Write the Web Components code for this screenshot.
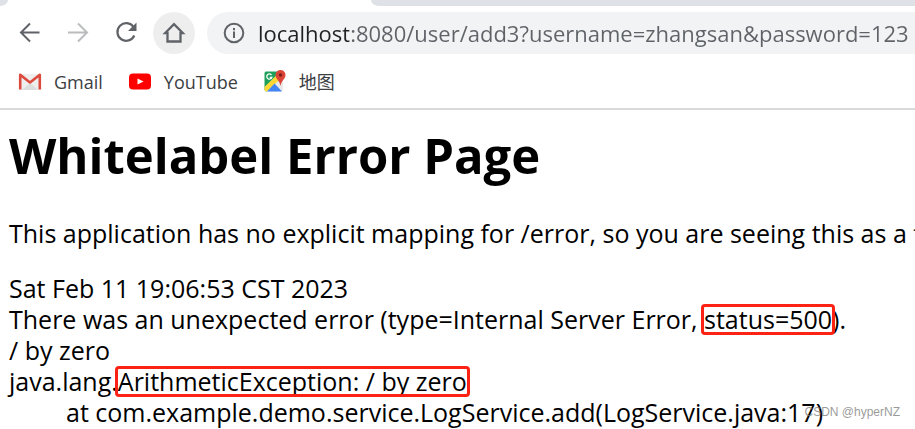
<!DOCTYPE html>
<html lang="en">
<head>
    <meta charset="utf-8">
    <title>Whitelabel Error Page</title>
    <style>
        body {
            margin: 0;
            background: #fff;
            font-family: "Open Sans", "Noto Sans CJK SC", sans-serif;
            overflow: hidden;
        }
    </style>
</head>
<body>

<browser-window>
    <tab-strip slot="chrome"></tab-strip>
    <nav-toolbar slot="chrome" url="localhost:8080/user/add3?username=zhangsan&amp;password=123"></nav-toolbar>
    <bookmark-bar slot="chrome">
        <bookmark-item href="#gmail">
            <svg slot="icon" width="24" height="24" viewBox="0 0 24 24" aria-hidden="true">
                <path d="M2 4h20v16H2z" fill="#eee"/>
                <path d="M4 20l8-7 8 7z" fill="#ddd"/>
                <path d="M2.200 19.500V4.800L12 12.500l9.800-7.700v14.700" fill="none" stroke="#dc4a3d" stroke-width="2.600" stroke-linejoin="round"/>
            </svg>
            Gmail
        </bookmark-item>
        <bookmark-item href="#youtube">
            <svg slot="icon" width="24" height="24" viewBox="0 0 24 24" aria-hidden="true">
                <rect x="1" y="3.500" width="22" height="16" rx="4" fill="#f00"/>
                <path d="M9.500 8.500v6l6-3z" fill="#fff"/>
            </svg>
            YouTube
        </bookmark-item>
        <bookmark-item href="#maps">
            <svg slot="icon" width="24" height="24" viewBox="0 0 24 24" aria-hidden="true">
                <path d="M3 1.500h15v6L4 21.500q-2.500 0-2.500-2V3.500q0-2 1.500-2z" fill="#1fa05a"/>
                <path d="M2 17L15 4l5 5v10.500q0 2-2 2H4z" fill="#e8e8e8"/>
                <path d="M1.500 17L13 6l3 4L4 21.500q-2.500 0-2.500-2z" fill="#fdd835"/>
                <path d="M4 21.500l7.500-8 7.500 8z" fill="#4285f4"/>
                <path d="M8.500 5A2.600 2.600 0 1 0 8.800 7.500H6.800" fill="none" stroke="#fff" stroke-width="1.300"/>
                <path d="M17.500 0a5 5 0 0 1 5 5c0 4-4 5-5 11-1-6-5-7-5-11a5 5 0 0 1 5-5z" fill="#db4437"/>
                <circle cx="17.500" cy="5" r="1.800" fill="#7b231b"/>
            </svg>
            地图
        </bookmark-item>
    </bookmark-bar>

    <error-page heading="Whitelabel Error Page">
        <p>This application has no explicit mapping for /error, so you are seeing this as a fallback.</p>
        <div>Sat Feb 11 19:06:53 CST 2023</div>
        <div>There was an unexpected error (type=Internal Server Error, <red-frame>status=500</red-frame>).</div>
        <div>/ by zero</div>
        <div>java.lang.<red-frame>ArithmeticException: / by zero</red-frame></div>
        <div class="trace">at com.example.demo.service.LogService.add(LogService.java:17)</div>
    </error-page>
    <water-mark slot="overlay">CSDN @hyperNZ</water-mark>
</browser-window>

<template id="browser-window">
    <style>
        :host {
            display: flex;
            flex-direction: column;
            position: relative;
            height: 100vh;
            overflow: hidden;
        }
        main {
            flex: 1;
            min-height: 0;
        }
    </style>
    <slot name="chrome"></slot>
    <main><slot></slot></main>
    <slot name="overlay"></slot>
</template>

<template id="tab-strip">
    <style>
        :host {
            display: flex;
            flex: none;
            height: 6px;
            background: #fff;
        }
        .before, .after {
            background: #dee1e6;
        }
        .before {
            width: 8px;
            border-bottom-right-radius: 8px 6px;
        }
        .tab {
            width: 363px;
        }
        .after {
            flex: 1;
            border-bottom-left-radius: 8px 6px;
        }
    </style>
    <div class="before"></div>
    <div class="tab"></div>
    <div class="after"></div>
</template>

<template id="nav-toolbar">
    <style>
        :host {
            display: flex;
            flex: none;
            gap: 12px;
            padding: 6px 0 6px 9px;
        }
        nav {
            display: flex;
            gap: 6px;
        }
        button {
            display: grid;
            place-items: center;
            width: 42px;
            height: 42px;
            padding: 0;
            border: 0;
            border-radius: 50%;
            background: none;
            color: #5f6368;
        }
        button:disabled {
            color: #babcbe;
        }
        button.hover {
            background: #eee;
        }
        svg {
            fill: none;
            stroke: currentColor;
            stroke-width: 2;
        }
        .omnibox {
            display: flex;
            flex: 1;
            align-items: center;
            gap: 12px;
            min-width: 0;
            padding-left: 15px;
            border-radius: 21px 0 0 21px;
            background: #f1f3f4;
            color: #5f6368;
        }
        .omnibox svg {
            flex: none;
        }
        input {
            --host-width: 91px;
            flex: 1;
            min-width: 0;
            padding: 0;
            border: 0;
            outline: 0;
            font: 22px/42px "Open Sans", sans-serif;
            color: #5f6368;
            background: linear-gradient(90deg, #202124 var(--host-width), #5f6368 var(--host-width));
            -webkit-background-clip: text;
            background-clip: text;
            -webkit-text-fill-color: transparent;
        }
    </style>
    <nav>
        <button aria-label="Back">
            <svg width="24" height="24" viewBox="0 0 24 24"><path d="M21.500 11.500H3.500M12 2.500l-9 9 9 9"/></svg>
        </button>
        <button aria-label="Forward" disabled>
            <svg width="24" height="24" viewBox="0 0 24 24"><path d="M2 11.500h18.500M12 2.500l9 9-9 9"/></svg>
        </button>
        <button aria-label="Reload">
            <svg width="24" height="24" viewBox="0 0 24 24">
                <path d="M19.500 6A8.800 8.800 0 1 0 20.300 14.500" stroke-width="2.200"/>
                <path d="M22.500 1.500V10H14z" fill="currentColor" stroke="none"/>
            </svg>
        </button>
        <button class="hover" aria-label="Home">
            <svg width="24" height="24" viewBox="0 0 24 24">
                <path d="M5.500 20.500V12H3.200L12 3.200l8.800 8.800h-2.300v8.500z" stroke-width="2.300"/>
            </svg>
        </button>
    </nav>
    <div class="omnibox">
        <svg width="24" height="24" viewBox="0 0 24 24">
            <circle cx="12" cy="12" r="9.300"/>
            <path d="M12 10.500v6.500M12 7v2.200"/>
        </svg>
        <input type="text" aria-label="Address" spellcheck="false">
    </div>
</template>

<template id="bookmark-bar">
    <style>
        :host {
            display: flex;
            flex: none;
            gap: 25px;
            height: 44px;
            padding: 0 18px 4px;
            border-bottom: 2px solid #dadada;
        }
    </style>
    <slot></slot>
</template>

<template id="bookmark-item">
    <style>
        :host {
            display: flex;
        }
        a {
            display: flex;
            align-items: center;
            gap: 12px;
            color: #3c4043;
            font-size: 18px;
            line-height: 24px;
            text-decoration: none;
            white-space: nowrap;
        }
    </style>
    <a><slot name="icon"></slot><span><slot></slot></span></a>
</template>

<template id="error-page">
    <style>
        :host {
            display: block;
            padding: 12px 9px;
            color: #000;
            font-size: 25px;
            line-height: 31px;
            white-space: nowrap;
        }
        h1 {
            margin: 0;
            font-size: 49px;
            line-height: 66px;
        }
        ::slotted(p) {
            margin: 30px 0 24px;
        }
        ::slotted(.trace) {
            padding-left: 57px;
        }
    </style>
    <h1></h1>
    <slot></slot>
</template>

<template id="red-frame"><style>
        :host {
            position: relative;
        }
        :host::after {
            content: "";
            position: absolute;
            inset: 2px -3px 1px;
            border: 3px solid #fc2314;
            border-radius: 4px;
        }
    </style><slot></slot></template>

<template id="water-mark">
    <style>
        :host {
            position: absolute;
            right: 15px;
            bottom: 8px;
            color: rgba(120, 120, 120, .75);
            font: 12px/18px "Liberation Sans", Arial, sans-serif;
        }
    </style>
    <slot></slot>
</template>

<script>
    (function(window, document) {

        // Clones the template whose id is the tag name into an open shadow root.
        class TemplateElement extends HTMLElement {
            constructor() {
                super();
                const template = document.getElementById(this.localName).content;
                this.attachShadow({mode: 'open'}).appendChild(document.importNode(template, true));
            }
        }

        class BrowserWindow extends TemplateElement {}
        class TabStrip extends TemplateElement {}
        class BookmarkBar extends TemplateElement {}
        class RedFrame extends TemplateElement {}
        class WaterMark extends TemplateElement {}

        class NavToolbar extends TemplateElement {
            static get observedAttributes() { return ['url']; }

            attributeChangedCallback(attrName, oldVal, newVal) {
                this.shadowRoot.querySelector('input').value = newVal;
            }
        }

        class BookmarkItem extends TemplateElement {
            static get observedAttributes() { return ['href']; }

            attributeChangedCallback(attrName, oldVal, newVal) {
                this.shadowRoot.querySelector('a').href = newVal;
            }
        }

        class ErrorPage extends TemplateElement {
            static get observedAttributes() { return ['heading']; }

            attributeChangedCallback(attrName, oldVal, newVal) {
                this.shadowRoot.querySelector('h1').textContent = newVal;
            }
        }

        window.customElements.define('browser-window', BrowserWindow);
        window.customElements.define('tab-strip', TabStrip);
        window.customElements.define('nav-toolbar', NavToolbar);
        window.customElements.define('bookmark-bar', BookmarkBar);
        window.customElements.define('bookmark-item', BookmarkItem);
        window.customElements.define('error-page', ErrorPage);
        window.customElements.define('red-frame', RedFrame);
        window.customElements.define('water-mark', WaterMark);
    })(window, document);
</script>
</body>
</html>
